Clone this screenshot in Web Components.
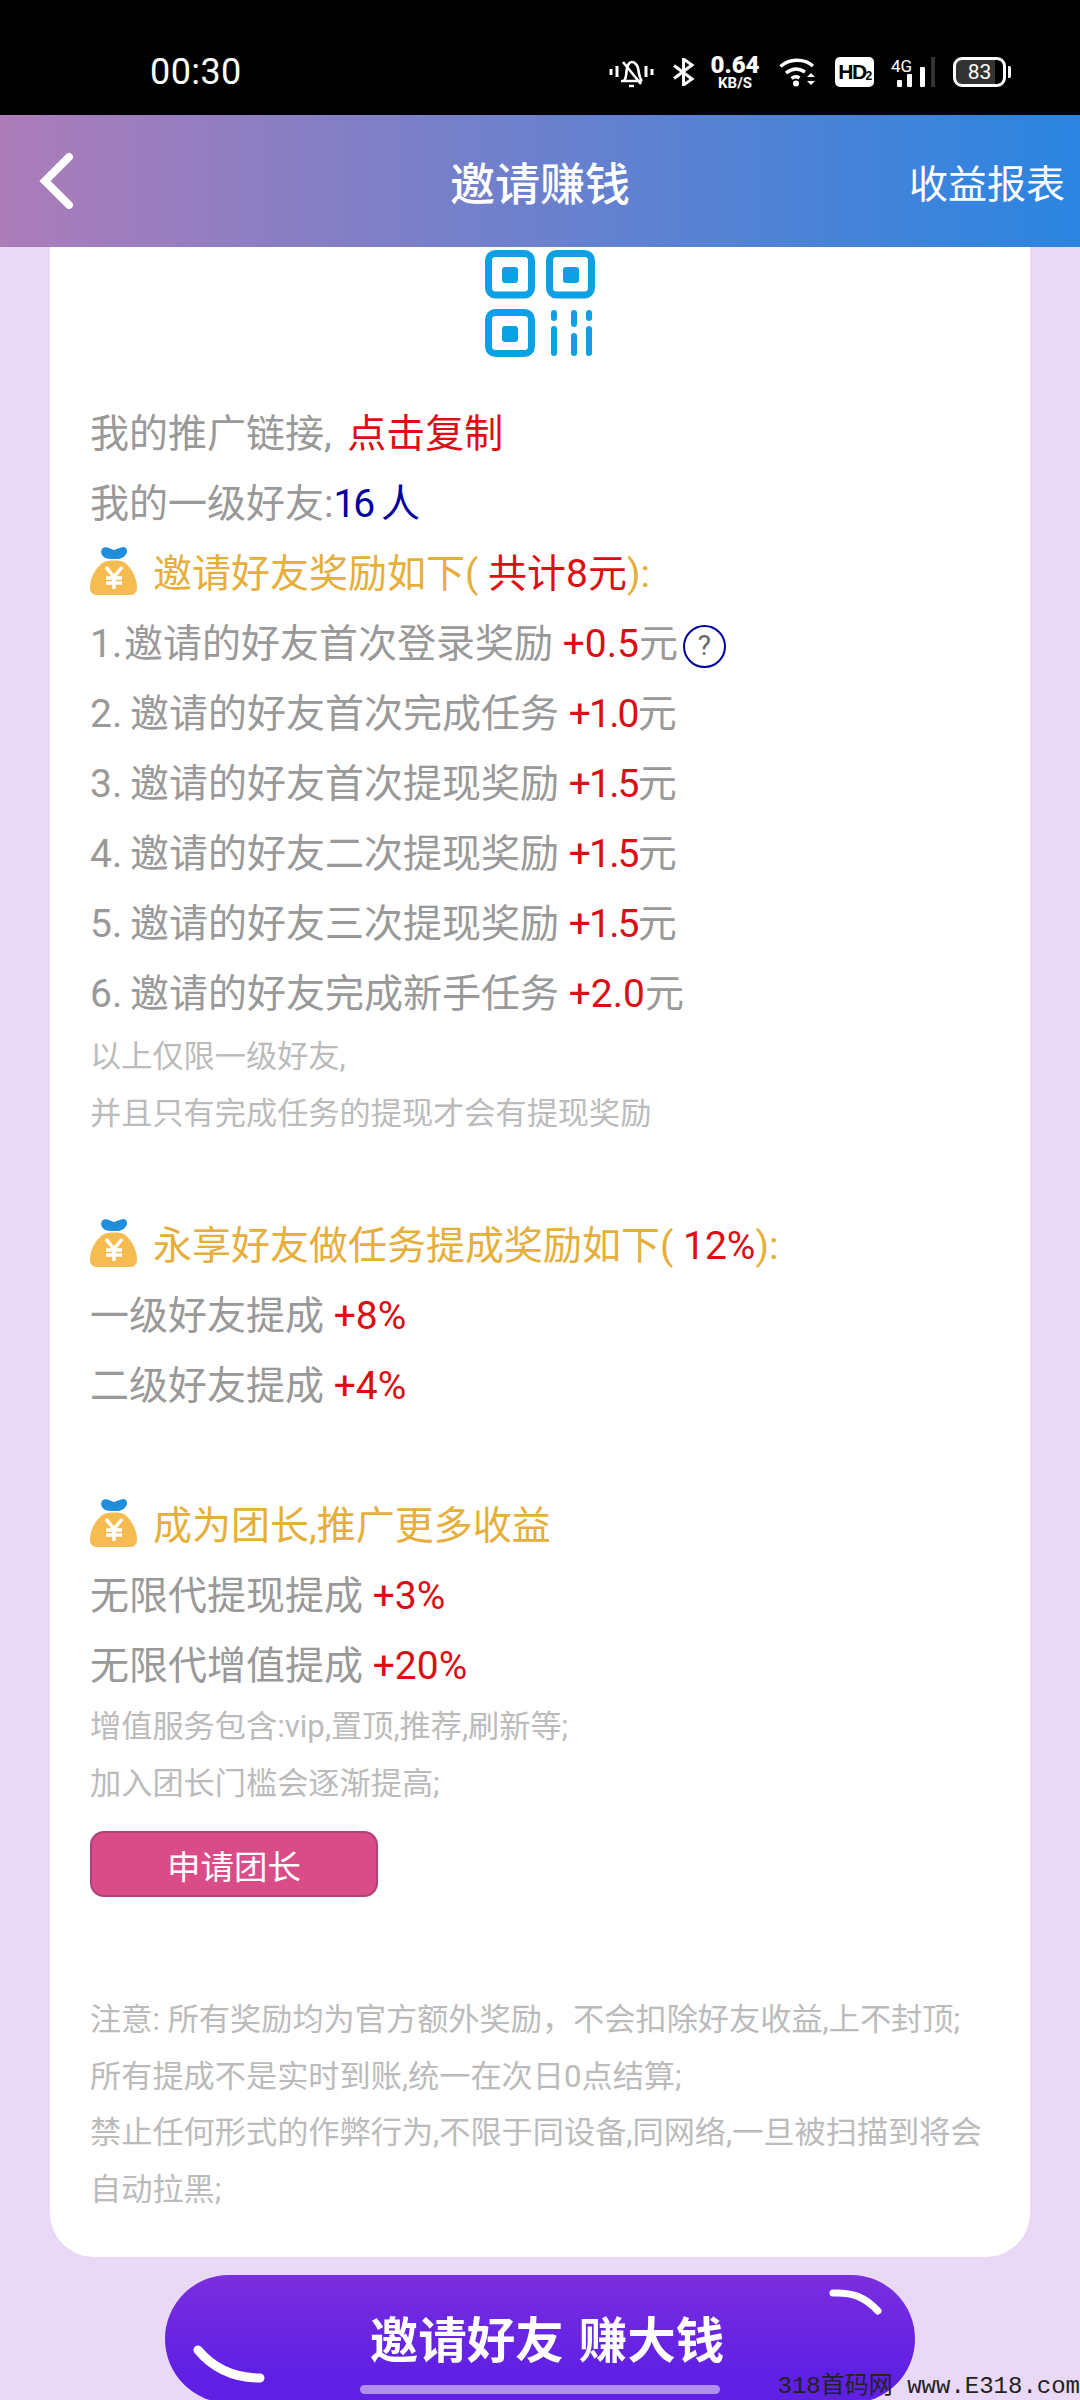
<!DOCTYPE html>
<html lang="zh">
<head>
<meta charset="utf-8">
<title>邀请赚钱</title>
<style>
  html, body { margin: 0; padding: 0; }
  body {
    width: 1080px;
    height: 2400px;
    overflow: hidden;
    background: #ead9f6;
    font-family: Roboto, "Noto Sans CJK SC", sans-serif;
  }
</style>
</head>
<body>
  <status-bar></status-bar>
  <app-header>
    <span slot="title">邀请赚钱</span>
    <span slot="action">收益报表</span>
  </app-header>
  <invite-card>
    <qr-mark></qr-mark>
    <reward-row style="word-spacing:6px">我的推广链接, <hl-text tone="red">点击复制</hl-text></reward-row>
    <reward-row>我的一级好友:<hl-text tone="blue">16 人</hl-text></reward-row>
    <reward-heading>邀请好友奖励如下( <hl-text tone="red">共计8元</hl-text>):</reward-heading>
    <reward-row><row-num narrow>1.</row-num>邀请的好友首次登录奖励 <hl-text tone="red">+0.5</hl-text>元<help-dot></help-dot></reward-row>
    <reward-row><row-num>2.</row-num>邀请的好友首次完成任务 <hl-text tone="red" tight>+1.0</hl-text>元</reward-row>
    <reward-row><row-num>3.</row-num>邀请的好友首次提现奖励 <hl-text tone="red" tight>+1.5</hl-text>元</reward-row>
    <reward-row><row-num>4.</row-num>邀请的好友二次提现奖励 <hl-text tone="red" tight>+1.5</hl-text>元</reward-row>
    <reward-row><row-num>5.</row-num>邀请的好友三次提现奖励 <hl-text tone="red" tight>+1.5</hl-text>元</reward-row>
    <reward-row><row-num>6.</row-num>邀请的好友完成新手任务 <hl-text tone="red">+2.0</hl-text>元</reward-row>
    <fine-print>以上仅限一级好友,</fine-print>
    <fine-print>并且只有完成任务的提现才会有提现奖励</fine-print>

    <reward-heading class="gap">永享好友做任务提成奖励如下( <hl-text tone="red">12%</hl-text>):</reward-heading>
    <reward-row>一级好友提成 <hl-text tone="red">+8%</hl-text></reward-row>
    <reward-row>二级好友提成 <hl-text tone="red">+4%</hl-text></reward-row>

    <reward-heading class="gap wide">成为团长,推广更多收益</reward-heading>
    <reward-row>无限代提现提成 <hl-text tone="red">+3%</hl-text></reward-row>
    <reward-row>无限代增值提成 <hl-text tone="red">+20%</hl-text></reward-row>
    <fine-print class="tight">增值服务包含:vip,置顶,推荐,刷新等;</fine-print>
    <fine-print>加入团长门槛会逐渐提高;</fine-print>
    <apply-button>申请团长</apply-button>

    <fine-print class="note">注意: 所有奖励均为官方额外奖励，不会扣除好友收益,上不封顶;</fine-print>
    <fine-print>所有提成不是实时到账,统一在次日0点结算;</fine-print>
    <fine-print>禁止任何形式的作弊行为,不限于同设备,同网络,一旦被扫描到将会</fine-print>
    <fine-print>自动拉黑;</fine-print>
  </invite-card>
  <invite-cta>邀请好友 赚大钱</invite-cta>
  <home-bar></home-bar>
  <water-mark>318首码网 www.E318.com</water-mark>

<script>
class StatusBar extends HTMLElement {
  constructor() {
    super();
    this.attachShadow({ mode: "open" });
    this.shadowRoot.innerHTML = `
      <style>
        :host {
          display: flex;
          align-items: center;
          box-sizing: border-box;
          height: 115px;
          padding: 29px 0 0 150px;
          background: #000;
          color: #fff;
          font-family: Roboto, sans-serif;
        }
        .time { font-size: 36px; flex: 1; letter-spacing: .4px; }
        .icons { display: flex; align-items: center; padding-right: 69px; }
        svg { display: block; }
        .speed {
          display: flex;
          flex-direction: column;
          align-items: center;
          width: 52px;
          margin: 0 18px 0 14px;
          font-weight: 700;
        }
        .speed b { font-size: 24px; line-height: 22px; }
        .speed i { font-style: normal; font-size: 15px; line-height: 15px; }
        .hd {
          width: 39px;
          height: 30px;
          margin: 0 17px 0 19px;
          border-radius: 5px;
          background: #fff;
          color: #000;
          font: 700 21px/30px "Liberation Sans", sans-serif;
          text-align: center;
          letter-spacing: -1.5px;
        }
        .hd sub { font-size: 12px; line-height: 0; vertical-align: -1px; }
        .battery {
          display: flex;
          align-items: center;
          justify-content: center;
          box-sizing: border-box;
          width: 53px;
          height: 30px;
          margin-left: 18px;
          border: 3px solid #fff;
          border-radius: 9px;
          font-size: 21px;
          background: linear-gradient(90deg, #333 82%, #000 82%);
        }
        .nub { width: 3px; height: 12px; margin-left: 2px; background: #fff; border-radius: 0 2px 2px 0; }
      </style>
      <span class="time">00:30</span>
      <div class="icons">
        <svg width="45" height="32" viewBox="0 0 45 32" fill="none" stroke="#fff" stroke-width="2.6">
          <path d="M2 13v6M8 10v11M37 10v11M43 13v6" stroke-width="3"/>
          <path d="M12 25h21M15 25c3-4 2-9 3-13 1-4 3-6 5-6s5 2 6 6c1 5 1 9 4 13"/>
          <path d="M14 6l18 22"/>
          <path d="M20 30h5" stroke-width="2.4"/>
        </svg>
        <svg style="margin-left:18px" width="23" height="28" viewBox="0 0 23 28" fill="none" stroke="#fff" stroke-width="3">
          <path d="M2 7.5l18 13.5-8.5 6V1l8.5 6L2 20.5"/>
        </svg>
        <div class="speed"><b>0.64</b><i>KB/S</i></div>
        <svg width="37" height="30" viewBox="0 0 37 30" fill="none" stroke="#fff" stroke-width="3.4">
          <path d="M1.5 9.5C10 1.500 25 1 34 9"/>
          <path d="M7 16c6-5 13-5 19-1"/>
          <path d="M12.500 21.500c2.500-2 5.500-2 8-.5"/>
          <circle cx="17" cy="26.500" r="3" fill="#fff" stroke="none"/>
          <path d="M28 20l4-4 4 4zM28 24l4 4 4-4z" fill="#fff" stroke="none"/>
        </svg>
        <div class="hd">HD<sub>2</sub></div>
        <svg width="44" height="30" viewBox="0 0 44 30">
          <text x="0" y="15" font-family="Roboto, sans-serif" font-size="17" fill="#fff">4G</text>
          <rect x="6" y="23" width="5" height="7" rx="1" fill="#fff"/>
          <rect x="16" y="17" width="5" height="13" rx="1" fill="#fff"/>
          <rect x="29" y="10" width="5" height="20" rx="1" fill="#fff"/>
          <rect x="40" y="0" width="4" height="30" fill="#333"/>
        </svg>
        <div class="battery">83</div>
        <div class="nub"></div>
      </div>
    `;
  }
}

class AppHeader extends HTMLElement {
  constructor() {
    super();
    this.attachShadow({ mode: "open" });
    this.shadowRoot.innerHTML = `
      <style>
        :host {
          display: grid;
          grid-template-columns: 1fr auto 1fr;
          align-items: center;
          box-sizing: border-box;
          height: 132px;
          padding: 0 15px;
          background: linear-gradient(90deg, #ad7cb9 0%, #2a85e1 100%);
          color: #fff;
          font-family: "Noto Sans CJK SC", sans-serif;
        }
        .title { font-size: 45px; font-weight: 500; }
        .action { justify-self: end; font-size: 39px; }
        svg { display: block; margin-left: 23px; }
      </style>
      <svg width="38" height="56" viewBox="0 0 38 56" fill="none" stroke="#fff" stroke-width="8" stroke-linecap="round" stroke-linejoin="miter">
        <path d="M31 4L7 28l24 24"/>
      </svg>
      <div class="title"><slot name="title"></slot></div>
      <div class="action"><slot name="action"></slot></div>
    `;
  }
}

class InviteCard extends HTMLElement {
  constructor() {
    super();
    this.attachShadow({ mode: "open" });
    this.shadowRoot.innerHTML = `
      <style>
        :host {
          display: flex;
          flex-direction: column;
          align-items: flex-start;
          box-sizing: border-box;
          width: 980px;
          height: 2010px;
          margin: 0 50px;
          padding: 3px 40px 0;
          background: #fff;
          border-radius: 0 0 44px 44px;
        }
        ::slotted(.gap) { margin-top: 69px; }
        ::slotted(.wide) { margin-top: 70px; }
        ::slotted(.tight) { margin-top: -2px; }
        ::slotted(.note) { margin-top: 95px; }
      </style>
      <slot></slot>
    `;
  }
}

class QrMark extends HTMLElement {
  constructor() {
    super();
    this.attachShadow({ mode: "open" });
    this.shadowRoot.innerHTML = `
      <style>
        :host { display: block; align-self: center; height: 107px; margin-bottom: 42px; }
        svg { display: block; }
      </style>
      <svg width="110" height="107" viewBox="0 0 110 107" fill="#0ea0e4">
        <g fill="none" stroke="#0ea0e4" stroke-width="7">
          <rect x="3.500" y="3.500" width="43" height="41.500" rx="7"/>
          <rect x="64.500" y="3.500" width="42" height="41.500" rx="7"/>
          <rect x="3.500" y="62.500" width="43" height="41" rx="7"/>
        </g>
        <rect x="17" y="17" width="16" height="16" rx="3"/>
        <rect x="78" y="17" width="16" height="16" rx="3"/>
        <rect x="17" y="76" width="16" height="16" rx="3"/>
        <rect x="66" y="60" width="6" height="11" rx="3"/>
        <rect x="66" y="76" width="6" height="30" rx="3"/>
        <rect x="86" y="60" width="6" height="17" rx="3"/>
        <rect x="86" y="83" width="6" height="23" rx="3"/>
        <rect x="101" y="60" width="6" height="11" rx="3"/>
        <rect x="101" y="76" width="6" height="30" rx="3"/>
      </svg>
    `;
  }
}

class RewardRow extends HTMLElement {
  constructor() {
    super();
    this.attachShadow({ mode: "open" });
    this.shadowRoot.innerHTML = `
      <style>
        :host {
          display: block;
          font-size: 39px;
          line-height: 70px;
          height: 70px;
          color: #999;
          white-space: nowrap;
        }
      </style>
      <slot></slot>
    `;
  }
}

class RowNum extends HTMLElement {
  constructor() {
    super();
    this.attachShadow({ mode: "open" });
    this.shadowRoot.innerHTML = `<style>
        :host { display: inline-block; width: 40px; }
        :host([narrow]) { width: 34px; }
      </style><slot></slot>`;
  }
}

class RewardHeading extends HTMLElement {
  constructor() {
    super();
    this.attachShadow({ mode: "open" });
    this.shadowRoot.innerHTML = `
      <style>
        :host {
          display: flex;
          align-items: center;
          gap: 16px;
          height: 70px;
          font-size: 39px;
          line-height: 70px;
          color: #e6ae3a;
          white-space: nowrap;
        }
        svg { display: block; flex: none; margin-top: -9px; }
      </style>
      <svg width="47" height="50" viewBox="0 0 47 50">
        <path d="M12 4C15 0 20 4 24 5c4-1 9-5 12-2 3 4-1 11-9 11h-6C14 14 9 9 12 4z" fill="#1f8fdc"/>
        <path d="M14 17c4-2 16-2 20 0 6 4 13 15 13 25 0 6-3 8-7 8H7c-4 0-7-2-7-8 0-10 7-21 14-25z" fill="#f6bc52"/>
        <path d="M16 22l8 10 8-10M16 33h16M16 38h16M24 32v12" fill="none" stroke="#fff" stroke-width="3.400"/>
      </svg>
      <span><slot></slot></span>
    `;
  }
}

// no whitespace round the slot: it would show as a gap in the inline text
class HlText extends HTMLElement {
  constructor() {
    super();
    this.attachShadow({ mode: "open" });
    this.shadowRoot.innerHTML = `<style>
        :host { display: inline; color: #dc0d14; }
        :host([tone="blue"]) { color: #00009e; letter-spacing: -2px; }
        :host([tight]) { letter-spacing: -1.800px; }
      </style><slot></slot>`;
  }
}

class HelpDot extends HTMLElement {
  constructor() {
    super();
    this.attachShadow({ mode: "open" });
    this.shadowRoot.innerHTML = `<style>
        :host {
          display: inline-flex;
          align-items: center;
          justify-content: center;
          box-sizing: border-box;
          width: 43px;
          height: 43px;
          margin-left: 5px;
          border: 2px solid #00009e;
          border-radius: 50%;
          color: #666;
          font-size: 28px;
          line-height: 1;
          vertical-align: 2px;
        }
      </style>?`;
  }
}

class FinePrint extends HTMLElement {
  constructor() {
    super();
    this.attachShadow({ mode: "open" });
    this.shadowRoot.innerHTML = `
      <style>
        :host {
          display: block;
          height: 56.500px;
          font-size: 31.200px;
          line-height: 56.500px;
          color: #bbb;
          white-space: nowrap;
        }
      </style>
      <slot></slot>
    `;
  }
}

class ApplyButton extends HTMLElement {
  constructor() {
    super();
    this.attachShadow({ mode: "open" });
    this.shadowRoot.innerHTML = `
      <style>
        :host {
          display: flex;
          align-items: center;
          justify-content: center;
          box-sizing: border-box;
          width: 288px;
          height: 66px;
          margin-top: 19px;
          border: 2px solid #b04279;
          border-radius: 14px;
          background: #d94c87;
          color: #fff;
          font-size: 33.500px;
        }
      </style>
      <slot></slot>
    `;
  }
}

class InviteCta extends HTMLElement {
  constructor() {
    super();
    this.attachShadow({ mode: "open" });
    this.shadowRoot.innerHTML = `
      <style>
        :host {
          display: flex;
          align-items: center;
          justify-content: center;
          position: relative;
          box-sizing: border-box;
          width: 750px;
          height: 128px;
          margin: 18px 0 0 165px;
          padding: 0 0 4px 14px;
          border-radius: 64px;
          background: linear-gradient(180deg, #7a2edd 0%, #6020e4 75%);
          color: #fff;
          font-family: "Noto Sans CJK SC", sans-serif;
          font-size: 48.500px;
          font-weight: 700;
          word-spacing: 4px;
        }
        svg { position: absolute; left: 0; top: 0; }
      </style>
      <svg width="750" height="124" viewBox="0 0 750 124" fill="none" stroke="#fff" stroke-linecap="round">
        <path d="M33 75c15 18 35 28 62 28" stroke-width="9"/>
        <path d="M668 18c19-1 32 4 45 18" stroke-width="7"/>
      </svg>
      <slot></slot>
    `;
  }
}

class HomeBar extends HTMLElement {
  constructor() {
    super();
    this.attachShadow({ mode: "open" });
    this.shadowRoot.innerHTML = `
      <style>
        :host {
          position: absolute;
          left: 360px;
          top: 2385px;
          width: 360px;
          height: 9px;
          border-radius: 5px;
          background: #b08fef;
        }
      </style>
    `;
  }
}

class WaterMark extends HTMLElement {
  constructor() {
    super();
    this.attachShadow({ mode: "open" });
    this.shadowRoot.innerHTML = `
      <style>
        :host {
          position: absolute;
          right: 0;
          top: 2374px;
          font: 24px/26px "Liberation Mono", "Noto Sans CJK SC", monospace;
          color: #222;
          white-space: nowrap;
        }
      </style>
      <slot></slot>
    `;
  }
}

customElements.define("status-bar", StatusBar);
customElements.define("app-header", AppHeader);
customElements.define("invite-card", InviteCard);
customElements.define("qr-mark", QrMark);
customElements.define("reward-row", RewardRow);
customElements.define("row-num", RowNum);
customElements.define("reward-heading", RewardHeading);
customElements.define("hl-text", HlText);
customElements.define("help-dot", HelpDot);
customElements.define("fine-print", FinePrint);
customElements.define("apply-button", ApplyButton);
customElements.define("invite-cta", InviteCta);
customElements.define("home-bar", HomeBar);
customElements.define("water-mark", WaterMark);
</script>
</body>
</html>
